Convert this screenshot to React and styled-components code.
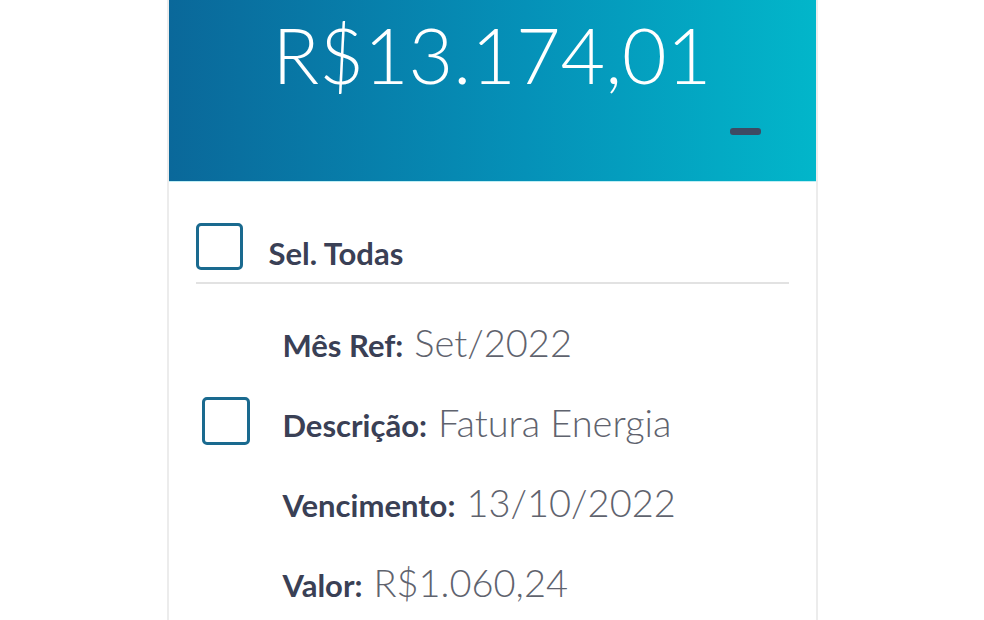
import React from "react";
import styled, { createGlobalStyle } from "styled-components";

const Global = createGlobalStyle`
  html, body { margin: 0; padding: 0; background: #ffffff; }
  body { font-family: Lato, "Open Sans", "Liberation Sans", sans-serif; }
  * { box-sizing: border-box; }
`;

const Card = styled.div`
  width: 651px;
  height: 620px;
  margin: 0 auto;
  border-left: 2px solid #ececec;
  border-right: 2px solid #ececec;
  background: #fff;
  overflow: hidden;
`;

const Header = styled.div`
  height: 181px;
  background: linear-gradient(90deg, #0a689a 0%, #0591b8 55%, #02b6ca 100%);
  display: flex;
  flex-direction: column;
  padding-top: 8px;
  box-shadow: 0 1px 0 #bfeef4;
`;

const Total = styled.div`
  color: #ffffff;
  font-size: 77px;
  font-weight: 300;
  line-height: 92px;
  text-align: center;
`;

const CollapseRow = styled.div`
  display: flex;
  justify-content: flex-end;
  padding-right: 55px;
  margin-top: 28px;
`;

const Dash = styled.div`
  width: 31px;
  height: 7px;
  border-radius: 3px;
  background: #3d4a63;
`;

const Body = styled.div`
  padding: 0 27px;
`;

const SelectAllRow = styled.div`
  display: flex;
  align-items: flex-start;
  padding-top: 42px;
  padding-bottom: 11px;
  border-bottom: 2px solid #e2e2e2;
`;

const Checkbox = styled.div`
  width: ${(p) => p.size}px;
  height: ${(p) => p.size}px;
  border: 3px solid #1a6a8f;
  border-radius: 5px;
  flex: none;
  background: #fff;
`;

const SelectAllLabel = styled.div`
  margin-left: 26px;
  margin-top: 12px;
  font-size: 31px;
  font-weight: 700;
  color: #3a4055;
  line-height: 36px;
`;

const Item = styled.div`
  display: flex;
  align-items: flex-start;
  padding-top: 18px;
`;

const ItemCheck = styled.div`
  margin-left: 6px;
  margin-top: 95px;
  margin-right: 33px;
`;

const Fields = styled.div`
  display: flex;
  flex-direction: column;
`;

const Field = styled.div`
  line-height: 80px;
  height: 80px;
  font-size: 38px;
  white-space: nowrap;
`;

const Label = styled.span`
  font-weight: 700;
  color: #3a4055;
  font-size: 31px;
  line-height: 1;
`;

const Value = styled.span`
  font-weight: 300;
  color: #5f636e;
  margin-left: 11px;
  font-size: 38px;
  line-height: 1;
`;

const fields = [
  ["Mês Ref:", "Set/2022"],
  ["Descrição:", "Fatura Energia"],
  ["Vencimento:", "13/10/2022"],
  ["Valor:", "R$1.060,24"],
];

export default function App() {
  return (
    <>
      <Global />
      <Card>
        <Header>
          <Total>R$13.174,01</Total>
          <CollapseRow>
            <Dash />
          </CollapseRow>
        </Header>
        <Body>
          <SelectAllRow>
            <Checkbox size={47} />
            <SelectAllLabel>Sel. Todas</SelectAllLabel>
          </SelectAllRow>
          <Item>
            <ItemCheck>
              <Checkbox size={48} />
            </ItemCheck>
            <Fields>
              {fields.map(([l, v]) => (
                <Field key={l}>
                  <Label>{l}</Label>
                  <Value>{v}</Value>
                </Field>
              ))}
            </Fields>
          </Item>
        </Body>
      </Card>
    </>
  );
}
